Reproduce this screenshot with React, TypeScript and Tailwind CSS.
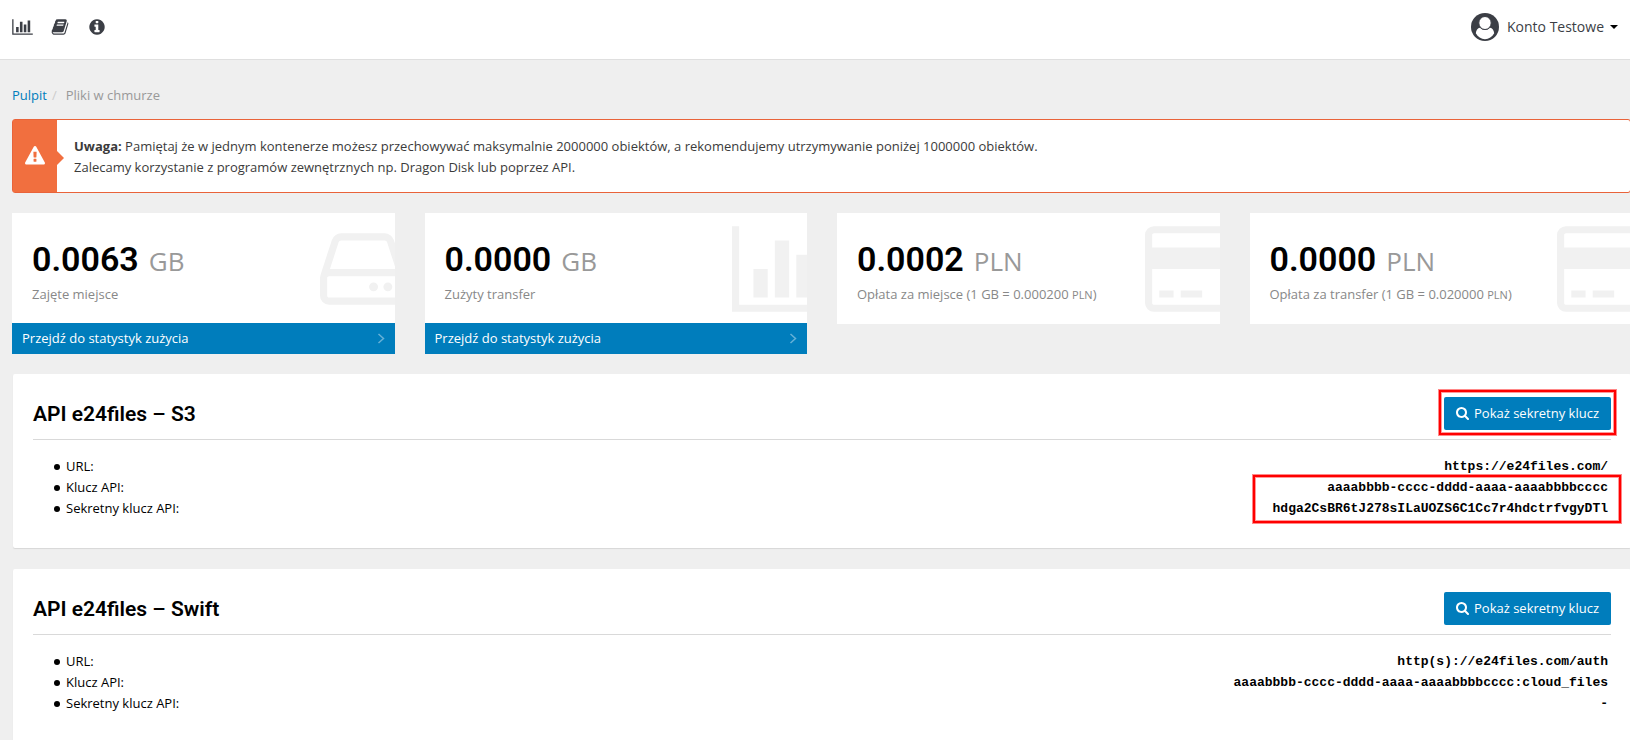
import type { ReactNode } from "react";

// Icon outlines, all on a 1792 units high canvas
const paths = {
  chart:
    "M640 896v512h-256v-512h256zm384-512v1024h-256v-1024h256zm1024 1152v128h-2048v-1536h128v1408h1920zm-640-896v768h-256v-768h256zm384-384v1152h-256v-1152h256z",
  book: "M1703 478q40 57 18 129l-275 906q-19 64-76.5 107.5t-122.5 43.5h-923q-77 0-148.5-53.5t-99.5-131.5q-24-67-2-127 0-4 3-27t4-37q1-8-3-21.5t-3-19.5q2-11 8-21t16.5-23.5 16.5-23.5q23-38 45-91.5t30-91.5q3-10 .5-30t-.5-28q3-11 17-28t17-23q21-36 42-92t25-90q1-9-2.5-32t.5-28q4-13 22-30.5t22-22.5q19-26 42.5-84.5t27.5-96.5q1-8-3-25.5t-2-26.5q2-8 9-18t18-23 17-21q8-12 16.5-30.5t15-35 16-36 19.5-32 26.5-23.5 36-11.5 47.5 5.5l-1 3q38-9 51-9h761q74 0 114 56t18 130l-274 906q-36 119-71.5 153.5t-128.5 34.5h-869q-27 0-38 15-11 16-1 43 24 70 144 70h923q29 0 56-15.5t35-41.5l300-987q7-22 5-57 38 15 59 43zm-1064 2q-4 13 2 22.5t20 9.5h608q13 0 25.5-9.5t16.5-22.5l21-64q4-13-2-22.5t-20-9.5h-608q-13 0-25.5 9.5t-16.5 22.5zm-83 256q-4 13 2 22.5t20 9.5h608q13 0 25.5-9.5t16.5-22.5l21-64q4-13-2-22.5t-20-9.5h-608q-13 0-25.5 9.5t-16.5 22.5z",
  info: "M1152 1376v-160q0-14-9-23t-23-9h-96v-512q0-14-9-23t-23-9h-320q-14 0-23 9t-9 23v160q0 14 9 23t23 9h96v320h-96q-14 0-23 9t-9 23v160q0 14 9 23t23 9h448q14 0 23-9t9-23zm-128-896v-160q0-14-9-23t-23-9h-192q-14 0-23 9t-9 23v160q0 14 9 23t23 9h192q14 0 23-9t9-23zm640 416q0 209-103 385.5t-279.5 279.5-385.5 103-385.5-103-279.5-279.5-103-385.5 103-385.5 279.5-279.5 385.5-103 385.5 103 279.5 279.5 103 385.5z",
  warning:
    "M1024 1375v-190q0-14-9.5-23.5t-22.5-9.5h-192q-13 0-22.5 9.5t-9.5 23.5v190q0 14 9.5 23.5t22.5 9.5h192q13 0 22.5-9.5t9.5-23.5zm-2-374l18-459q0-12-10-19-13-11-24-11h-220q-11 0-24 11-10 7-10 21l17 457q0 10 10 16.5t24 6.5h185q14 0 23.5-6.5t10.5-16.5zm-14-934l768 1408q35 63-2 126-17 29-46.5 46t-63.5 17h-1536q-34 0-63.5-17t-46.5-46q-37-63-2-126l768-1408q17-31 47-49t65-18 65 18 47 49z",
  search:
    "M1216 832q0-185-131.5-316.5t-316.5-131.5-316.5 131.5-131.5 316.5 131.5 316.5 316.5 131.5 316.5-131.5 131.5-316.5zm512 832q0 52-38 90t-90 38q-54 0-90-38l-343-342q-179 124-399 124-143 0-273.5-55.5t-225-150-150-225-55.5-273.5 55.5-273.5 150-225 225-150 273.5-55.5 273.5 55.5 225 150 150 225 55.5 273.5q0 220-124 399l343 343q37 37 37 90z",
  disk: "M1168 1216q0 33-23.5 56.5t-56.5 23.5-56.5-23.5-23.5-56.5 23.5-56.5 56.5-23.5 56.5 23.5 23.5 56.5zm256 0q0 33-23.5 56.5t-56.5 23.5-56.5-23.5-23.5-56.5 23.5-56.5 56.5-23.5 56.5 23.5 23.5 56.5zm112 160v-320q0-13-9.5-22.5t-22.5-9.5h-1216q-13 0-22.5 9.5t-9.5 22.5v320q0 13 9.5 22.5t22.5 9.5h1216q13 0 22.5-9.5t9.5-22.5zm-1230-480h1180l-157-482q-4-13-16-21.5t-26-8.5h-782q-14 0-26 8.5t-16 21.5zm1358 160v320q0 66-47 113t-113 47h-1216q-66 0-113-47t-47-113v-320q0-25 16-75l197-606q17-53 63-86t101-33h782q55 0 101 33t63 86l197 606q16 50 16 75z",
  card: "M1760 128q66 0 113 47t47 113v1216q0 66-47 113t-113 47h-1600q-66 0-113-47t-47-113v-1216q0-66 47-113t113-47h1600zm-1600 128q-13 0-22.5 9.5t-9.5 22.5v224h1664v-224q0-13-9.5-22.5t-22.5-9.5h-1600zm1600 1280q13 0 22.5-9.5t9.5-22.5v-608h-1664v608q0 13 9.5 22.5t22.5 9.5h1600zm-1504-128v-128h256v128h-256zm384 0v-128h384v128h-384z",
};

type IconName = keyof typeof paths;

function Icon({ name, box, className }: { name: IconName; box: string; className: string }) {
  return (
    <svg viewBox={box} className={className} fill="currentColor" aria-hidden="true">
      <path d={paths[name]} />
    </svg>
  );
}

interface Stat {
  value: string;
  unit: string;
  label: ReactNode;
  icon: IconName;
  box: string;
  link?: boolean;
}

const stats: Stat[] = [
  { value: "0.0063", unit: "GB", label: "Zajęte miejsce", icon: "disk", box: "128 0 1344 1792", link: true },
  { value: "0.0000", unit: "GB", label: "Zużyty transfer", icon: "chart", box: "0 0 1344 1792", link: true },
  {
    value: "0.0002",
    unit: "PLN",
    label: (
      <>
        Opłata za miejsce (1 GB = 0.000200 <span className="text-[11px]">PLN</span>)
      </>
    ),
    icon: "card",
    box: "0 0 1344 1792",
  },
  {
    value: "0.0000",
    unit: "PLN",
    label: (
      <>
        Opłata za transfer (1 GB = 0.020000 <span className="text-[11px]">PLN</span>)
      </>
    ),
    icon: "card",
    box: "0 0 1344 1792",
  },
];

function StatCard({ stat }: { stat: Stat }) {
  return (
    <div>
      <div className="relative h-[111px] bg-white pl-5 pt-6">
        <Icon name={stat.icon} box={stat.box} className="absolute right-0 top-1.5 h-[100px] w-[75px] text-[#f1f1f1]" />
        <p className="relative flex items-baseline gap-2.5 leading-[44px]">
          <span className="font-[Roboto] text-[34px] font-semibold text-black">{stat.value}</span>
          <span className="text-[26px] text-[#999]">{stat.unit}</span>
        </p>
        <p className="relative mt-px text-[13px] leading-[21px] text-[#888]">{stat.label}</p>
      </div>
      {stat.link && (
        <a href="#stats" className="relative -mt-px flex h-[31px] items-center justify-between bg-[#007dbc] px-2.5 pt-px text-[13px] text-white">
          Przejdź do statystyk zużycia
          <svg viewBox="0 0 8 12" className="h-3 w-2" fill="none" stroke="#66b1d7" strokeWidth="1.5" aria-hidden="true">
            <path d="M1.5 1 6.5 5.500l-5 4.500" />
          </svg>
        </a>
      )}
    </div>
  );
}

interface Api {
  title: string;
  url: string;
  apiKey: string;
  secret: string;
  marked?: boolean;
}

const apis: Api[] = [
  {
    title: "API e24files – S3",
    url: "https://e24files.com/",
    apiKey: "aaaabbbb-cccc-dddd-aaaa-aaaabbbbcccc",
    secret: "hdga2CsBR6tJ278sILaUOZS6C1Cc7r4hdctrfvgyDTl",
    marked: true,
  },
  {
    title: "API e24files – Swift",
    url: "http(s)://e24files.com/auth",
    apiKey: "aaaabbbb-cccc-dddd-aaaa-aaaabbbbcccc:cloud_files",
    secret: "-",
  },
];

function ApiPanel({ api }: { api: Api }) {
  const rows = [
    ["URL:", api.url],
    ["Klucz API:", api.apiKey],
    ["Sekretny klucz API:", api.secret],
  ];

  return (
    <section className="rounded-xs bg-white px-5 pb-[29px] shadow-[0_1px_1px_rgba(0,0,0,0.1)]">
      <div className="flex h-[66px] items-end justify-between border-b border-[#d9d9d9] pb-[9px]">
        <h2 className="font-[Roboto] text-[21px] font-semibold leading-8 text-black">{api.title}</h2>
        <div className="relative">
          <button className="flex h-[33px] items-center gap-[5px] rounded-xs bg-[#007dbc] px-3 text-[13px] text-white">
            <Icon name="search" box="64 128 1664 1664" className="size-[13px]" />
            Pokaż sekretny klucz
          </button>
          {api.marked && (
            <span className="pointer-events-none absolute -inset-x-[5px] -bottom-[5px] -top-[7px] border-2 border-[#f00] shadow-[inset_0_0_0_1px_#f99] outline-1 outline-[#f88]" />
          )}
        </div>
      </div>
      <div className="relative mt-4">
        <ul className="pl-[21px] text-[13px] leading-[21px] text-black">
          {rows.map(([label, value]) => (
            <li key={label} className="flex items-center pr-[3px]">
              <span className="mr-1.5 size-1.5 rounded-full bg-black" />
              <span>{label}</span>
              <span className="ml-auto font-['Liberation_Mono',monospace] font-bold">{value}</span>
            </li>
          ))}
        </ul>
        {api.marked && (
          <span className="pointer-events-none absolute -bottom-1 -right-[10px] h-12 w-[368px] border-2 border-[#f00] shadow-[inset_0_0_0_1px_#f99] outline-1 outline-[#f88]" />
        )}
      </div>
    </section>
  );
}

export default function App() {
  return (
    <div className="h-screen overflow-hidden bg-[#efefef] font-['Open_Sans',sans-serif] text-[#3b3e45]">
      {/* Top bar */}
      <header className="flex h-[60px] items-center justify-between border-b border-[#dfdfdf] bg-white px-3 pb-1.5">
        <nav className="flex items-center">
          <a href="#stats" aria-label="Statystyki" className="mr-[18px]">
            <Icon name="chart" box="0 0 2048 1792" className="h-[18px] w-[21px]" />
          </a>
          <a href="#docs" aria-label="Dokumentacja" className="mr-5">
            <Icon name="book" box="0 0 1792 1792" className="size-[18px]" />
          </a>
          <a href="#info" aria-label="Informacje">
            <Icon name="info" box="128 0 1536 1792" className="h-[18px] w-4" />
          </a>
        </nav>
        <button className="flex items-center text-sm">
          <svg viewBox="0 0 28 28" className="mr-2 size-7" aria-hidden="true">
            <circle cx="14" cy="14" r="14" fill="#3b3e45" />
            <path d="M4.800 20.300c.3-3 1.800-5.300 4.200-5.600 2.800 3 7.200 3 10 0 2.400.3 3.900 2.600 4.200 5.600-2 3.700-5.400 5.900-9.200 5.900s-7.200-2.200-9.200-5.900z" fill="#fff" />
            <ellipse cx="14" cy="10" rx="6.200" ry="6.500" fill="#fff" stroke="#3b3e45" />
          </svg>
          Konto Testowe
          <svg viewBox="0 0 8 4" className="ml-1.5 h-1 w-2" aria-hidden="true">
            <path d="M0 0h8L4 4z" fill="#000" />
          </svg>
        </button>
      </header>

      <main className="pl-3">
        {/* Breadcrumb */}
        <nav className="flex gap-[5px] pb-[13px] pt-[25px] text-[13px] leading-[21px]">
          <a href="#home" className="text-[#007dbc]">
            Pulpit
          </a>
          <span className="text-[#ccc]">/</span>
          <span className="pl-1 text-[#999]">Pliki w chmurze</span>
        </nav>

        {/* Warning */}
        <div className="-mr-px flex rounded-[3px] border border-[#e9633a] bg-white">
          <div className="relative flex h-[72px] w-11 items-center justify-center bg-[#f16f3f] text-white">
            <Icon name="warning" box="0 0 1792 1792" className="size-5" />
            <span className="absolute -right-[7px] top-[31px] border-y-[7px] border-l-[7px] border-y-transparent border-l-[#f16f3f]" />
          </div>
          <p className="pl-[17px] pt-4 text-[13px] leading-[21px] text-[#3b3b3b]">
            <strong>Uwaga:</strong> Pamiętaj że w jednym kontenerze możesz przechowywać maksymalnie 2000000 obiektów, a
            rekomendujemy utrzymywanie poniżej 1000000 obiektów.
            <br />
            Zalecamy korzystanie z programów zewnętrznych np. Dragon Disk lub poprzez API.
          </p>
        </div>

        {/* Usage */}
        <div className="-mr-0.5 mt-5 grid grid-cols-4 gap-[30px]">
          {stats.map((stat, i) => (
            <StatCard key={i} stat={stat} />
          ))}
        </div>

        {/* API access */}
        <div className="-mr-px ml-px mt-5 flex flex-col gap-[21px]">
          {apis.map((api) => (
            <ApiPanel key={api.title} api={api} />
          ))}
        </div>
      </main>
    </div>
  );
}
